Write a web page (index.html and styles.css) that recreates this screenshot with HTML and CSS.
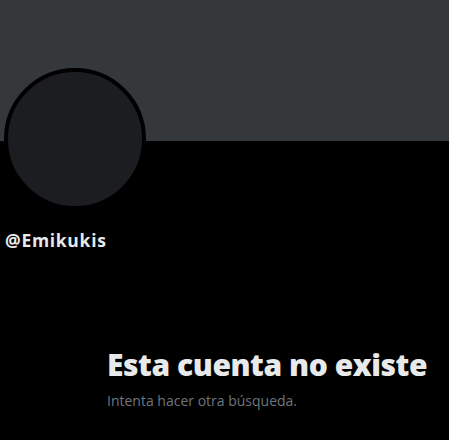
FILE: index.html
```html
<!DOCTYPE html>
<html lang="es">
<head>
<meta charset="utf-8">
<link rel="stylesheet" href="styles.css">
</head>
<body>
<div class="page">
  <div class="banner"></div>
  <div class="profile">
    <div class="avatar"></div>
    <div class="handle">@Emikukis</div>
  </div>
  <div class="empty">
    <div class="title">Esta cuenta no existe</div>
    <div class="subtitle">Intenta hacer otra búsqueda.</div>
  </div>
</div>
</body>
</html>
```
FILE: styles.css
```css
html, body {
  margin: 0;
  padding: 0;
  background: #000;
}
.page {
  width: 449px;
  height: 440px;
  overflow: hidden;
  background: #000;
  font-family: "Open Sans", "Noto Sans", sans-serif;
}
.banner {
  height: 141px;
  background: #35383b;
}
.profile {
  padding-left: 4px;
  margin-top: -73px;
  display: flex;
  flex-direction: column;
}
.avatar {
  width: 134px;
  height: 134px;
  border: 4px solid #000;
  border-radius: 50%;
  background: #1c1d21;
}
.handle {
  margin-top: 19px;
  padding-left: 1px;
  color: #e7e9ea;
  font-size: 17.5px;
  font-weight: 700;
  letter-spacing: 0.7px;
  line-height: 22px;
}
.empty {
  padding-left: 107px;
  margin-top: 96px;
}
.title {
  color: #e7e9ea;
  font-size: 30px;
  font-weight: 800;
  letter-spacing: -0.45px;
  line-height: 36px;
}
.subtitle {
  margin-top: 8px;
  color: #6e767d;
  font-size: 14px;
  line-height: 20px;
}
```
